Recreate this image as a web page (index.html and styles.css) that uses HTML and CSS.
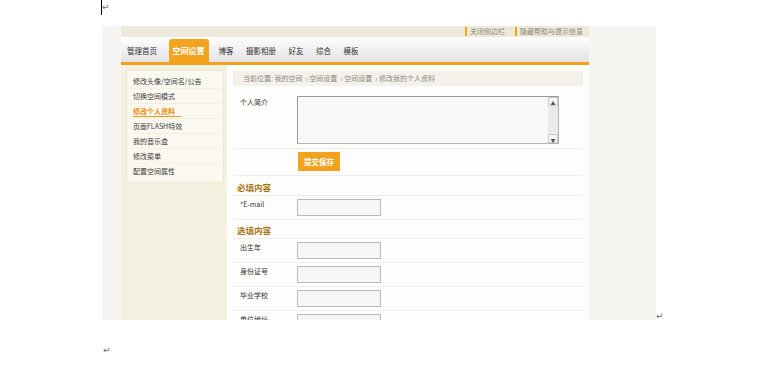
FILE: index.html
```html
<!DOCTYPE html>
<html lang="zh-CN">
<head>
  <meta charset="UTF-8">
  <title>修改我的个人资料</title>
  <link rel="stylesheet" href="styles.css">
</head>
<body>
  <div class="doc">
    <p class="para first"><span class="caret"></span><span class="mark">↵</span></p>

    <p class="para shot-line">
      <span class="shot">
        <span class="page">
          <span class="topbar">
            <a class="toplink">关闭侧边栏</a>
            <a class="toplink">隐藏帮助与提示信息</a>
          </span>
          <span class="nav">
            <a class="tab">管理首页</a>
            <a class="tab active">空间设置</a>
            <a class="tab">博客</a>
            <a class="tab">摄影相册</a>
            <a class="tab">好友</a>
            <a class="tab">综合</a>
            <a class="tab">模板</a>
          </span>
          <span class="body">
            <span class="side">
              <span class="menu">
                <a class="item">修改头像/空间名/公告</a>
                <a class="item">切换空间模式</a>
                <a class="item current">修改个人资料</a>
                <a class="item">页面FLASH特效</a>
                <a class="item">我的音乐盒</a>
                <a class="item">修改菜单</a>
                <a class="item">配置空间属性</a>
              </span>
            </span>
            <span class="main">
              <span class="crumbs">当前位置: 我的空间 &nbsp;›&nbsp;空间设置 &nbsp;›&nbsp;空间设置 &nbsp;›&nbsp;修改我的个人资料</span>

              <span class="row intro">
                <span class="label">个人简介</span>
                <span class="textarea">
                  <span class="scroll">
                    <span class="arrow">▲</span>
                    <span class="arrow">▼</span>
                  </span>
                </span>
              </span>
              <span class="row submit">
                <span class="label"></span>
                <span class="button">提交保存</span>
              </span>

              <span class="heading">必填内容</span>
              <span class="row">
                <span class="label">*E-mail</span>
                <span class="input"></span>
              </span>

              <span class="heading second">选填内容</span>
              <span class="row">
                <span class="label">出生年</span>
                <span class="input"></span>
              </span>
              <span class="row">
                <span class="label">身份证号</span>
                <span class="input"></span>
              </span>
              <span class="row">
                <span class="label">毕业学校</span>
                <span class="input"></span>
              </span>
              <span class="row">
                <span class="label">单位地址</span>
                <span class="input"></span>
              </span>
            </span>
          </span>
        </span>
      </span>
      <span class="mark">↵</span>
    </p>

    <p class="para last"><span class="mark">↵</span></p>
  </div>
</body>
</html>
```

FILE: styles.css
```css
body {
  margin: 0;
  background: #fff;
  font-family: "Noto Sans CJK SC", "DejaVu Sans", sans-serif;
}

.doc {
  padding-left: 101px;
}

.para {
  margin: 0;
  display: flex;
}

/* word processor marks */
.mark {
  font-family: "DejaVu Sans", sans-serif;
  font-size: 9px;
  line-height: 10px;
  color: #6d6d6d;
}

.first {
  height: 26px;
  align-items: flex-start;
}

.caret {
  width: 1px;
  height: 15px;
  background: #000;
}

.first .mark {
  margin-top: 2px;
}

.shot-line {
  align-items: flex-end;
}

.shot-line .mark {
  margin-bottom: -1px;
}

.last {
  margin-top: 25px;
}

.last .mark {
  margin-left: 2px;
}

/* the pasted screenshot */
.shot {
  display: block;
  width: 554px;
  height: 294px;
  margin-left: 1px;
  overflow: hidden;
  background: #f6f5f1;
}

.shot span, .shot a {
  display: block;
}

.page {
  width: 468px;
  height: 100%;
  margin-left: 19px;
  background: #fdfdfb;
}

.topbar {
  height: 11px;
  background: #eeeadb;
  display: flex !important;
  justify-content: flex-end;
  gap: 10px;
  padding-right: 6px;
}

.toplink {
  font-size: 7px;
  color: #8a8678;
  border-left: 2px solid #f2a51c;
  padding-left: 3px;
  height: 9px;
  margin-top: 1px;
  line-height: 9px;
}

.nav {
  height: 25px;
  display: flex !important;
  align-items: flex-end;
  background: linear-gradient(#fefefe, #e3e3e5);
  border-bottom: 3px solid #f1a11d;
}

.tab {
  font-size: 7.5px;
  color: #333;
  padding: 0 6px;
  margin-right: 0.5px;
  height: 23px;
  line-height: 23px;
}

.tab.active {
  background: #f2a41e;
  color: #fff;
  font-weight: bold;
  font-size: 8px;
  padding: 0 4px;
  margin: 0 4px 0 5px;
  border-radius: 3px 3px 0 0;
}

.body {
  display: flex !important;
  height: 255px;
}

.side {
  width: 106px;
  background: #f5f1e0;
  padding: 5px 0 0 5px;
  box-sizing: border-box;
}

.menu {
  width: 98px;
  height: 113px;
  background: #faf8ef;
  border: 1px solid #ece7d3;
  padding-top: 3px;
  box-sizing: border-box;
}

.item {
  font-size: 7px;
  color: #3a3a3a;
  height: 15px;
  line-height: 15px;
  margin: 0 3px;
  padding-left: 3px;
  border-bottom: 1px solid #f3f0e2;
  box-sizing: border-box;
}

.item:last-child {
  border-bottom: none;
}

.item.current {
  color: #e8900f;
  font-weight: bold;
}

.item.current::after {
  content: "";
  display: block;
  width: 48px;
  height: 1px;
  margin-top: -3px;
  background: #eb9a1c;
}

.main {
  flex: 1;
  padding: 6px 6px 0 6px;
}

.crumbs {
  height: 15px;
  line-height: 15px;
  background: #f3f1ea;
  font-size: 7px;
  color: #8d8a80;
  padding-left: 10px;
  margin-bottom: 4px;
}

.row {
  display: flex !important;
  align-items: flex-start;
  border-bottom: 1px solid #ececea;
  height: 24px;
  box-sizing: border-box;
  padding-top: 3px;
}

.label {
  width: 57px;
  padding-left: 7px;
  padding-top: 1px;
  font-size: 7px;
  line-height: 8px;
  color: #333;
  flex: none;
}

.intro {
  height: 59px;
  padding-top: 6px;
}

.intro .label {
  padding-top: 2px;
}

.textarea {
  width: 262px;
  height: 48px;
  box-sizing: border-box;
  border: 1px solid #b4b4b4;
  border-top-color: #9a9a9a;
  border-left-color: #9a9a9a;
  background: #f8f8f7;
  display: flex !important;
  justify-content: flex-end;
}

.scroll {
  width: 10px;
  background: #ebeae8;
  display: flex !important;
  flex-direction: column;
  justify-content: space-between;
}

.arrow {
  height: 9px;
  font-size: 5px;
  line-height: 9px;
  text-align: center;
  color: #555;
  background: #f4f4f3;
  border: 1px solid #c9c9c6;
  box-sizing: border-box;
}

.submit {
  height: 27px;
  padding-top: 3px;
}

.button {
  width: 42px;
  height: 19px;
  line-height: 19px;
  text-align: center;
  background: #f2a21c;
  color: #fff;
  font-size: 7.5px;
  font-weight: bold;
  margin-left: 1px;
}

.heading {
  height: 20px;
  line-height: 22px;
  padding-left: 4px;
  font-size: 8.5px;
  font-weight: bold;
  color: #a8720e;
  border-bottom: 1px solid #ececea;
  box-sizing: border-box;
}

.heading.second {
  height: 19px;
  line-height: 20px;
}

.input {
  width: 84px;
  height: 17px;
  box-sizing: border-box;
  border: 1px solid #b9b9b9;
  background: #f6f6f5;
}
```
